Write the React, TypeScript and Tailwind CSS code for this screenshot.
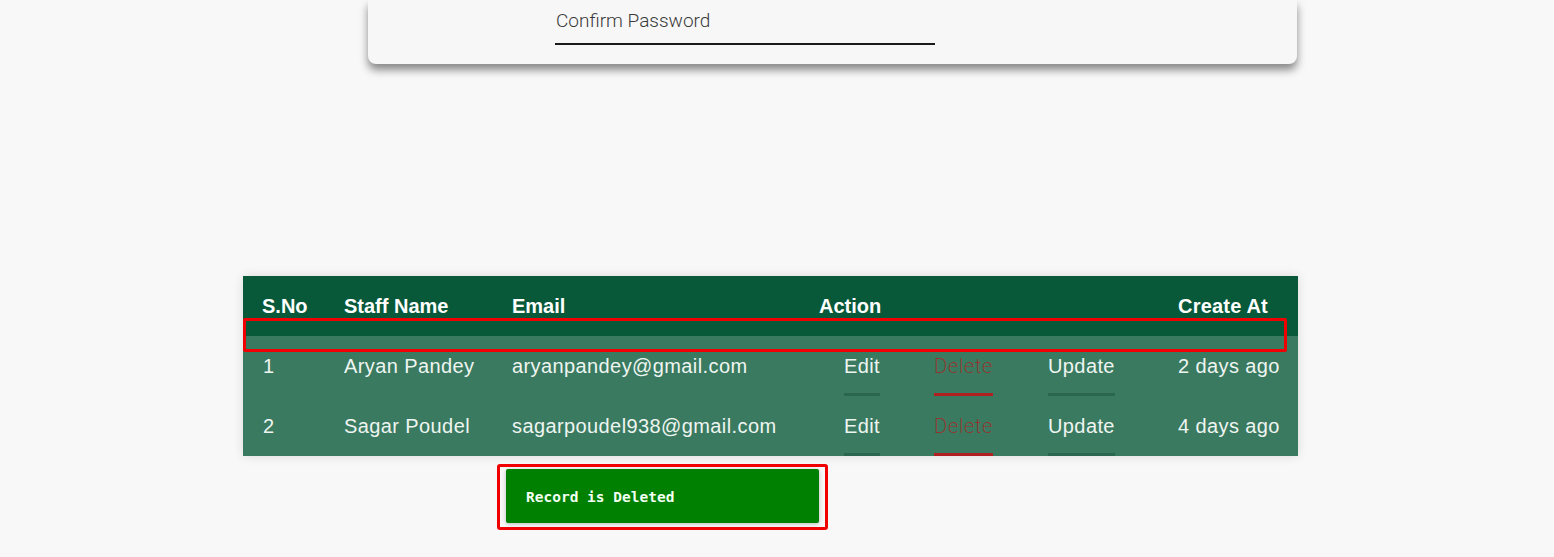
import React from 'react';

interface Staff {
  id: number;
  name: string;
  email: string;
  created: string;
}

const staff: Staff[] = [
  { id: 1, name: 'Aryan Pandey', email: 'aryanpandey@gmail.com', created: '2 days ago' },
  { id: 2, name: 'Sagar Poudel', email: 'sagarpoudel938@gmail.com', created: '4 days ago' },
];

const App: React.FC = () => {
  return (
    <div className="relative min-h-[557px] w-full bg-[#f8f8f8] font-['Liberation_Sans',Arial,sans-serif] overflow-hidden">
      {/* Form card (scrolled, only its bottom is visible) */}
      <div className="ml-[368px] w-[929px] h-[64px] bg-[#f7f7f7] rounded-b-[8px] shadow-[0_6px_8px_rgba(0,0,0,0.45)] pl-[187px] pt-[8px]">
        <div className="w-[380px]">
          <div className="font-['Roboto',sans-serif] font-light text-[19px] leading-[25px] text-[#3a3a3a] pl-[1px]">
            Confirm Password
          </div>
          <div className="mt-[10px] h-[2px] bg-[#1a1a1a]" />
        </div>
      </div>

      {/* Staff table */}
      <div className="ml-[243px] mt-[212px] w-[1055px] h-[180px] overflow-hidden shadow-[0_0_10px_rgba(0,0,0,0.12)]">
        <div className="flex h-[60px] bg-[#07593a] text-white font-bold text-[20px] leading-[24px] pt-[18px]">
          <div className="w-[101px] pl-[19px]">S.No</div>
          <div className="w-[168px]">Staff Name</div>
          <div className="w-[307px]">Email</div>
          <div className="w-[359px]">Action</div>
          <div className="tracking-[0.2px]">Create At</div>
        </div>
        {staff.map((s) => (
          <div
            key={s.id}
            className="flex h-[60px] bg-[#3a7a60] text-[#eef5f1] text-[20px] leading-[24px] tracking-[0.4px] pt-[18px]"
          >
            <div className="w-[101px] pl-[20px]">{s.id}</div>
            <div className="w-[168px]">{s.name}</div>
            <div className="w-[332px]">{s.email}</div>
            <div className="w-[90px]">
              <span className="inline-block pb-[15px] border-b-[3px] border-[#2b6650]">Edit</span>
            </div>
            <div className="w-[114px]">
              <span className="inline-block pb-[15px] border-b-[3px] border-[#b02020] text-[#a62624] font-['Roboto',sans-serif] font-extralight tracking-[0.8px]">
                Delete
              </span>
            </div>
            <div className="w-[130px]">
              <span className="inline-block pb-[15px] border-b-[3px] border-[#2b6650]">Update</span>
            </div>
            <div>{s.created}</div>
          </div>
        ))}
      </div>

      {/* Toast */}
      <div className="ml-[506px] mt-[13px] w-[313px] h-[54px] bg-[#008000] rounded-[2px] shadow-[0_1px_4px_rgba(0,0,0,0.25)] flex items-center pl-[20px] pt-[3px]">
        <span className="font-['DejaVu_Sans_Mono',monospace] font-bold text-[14.5px] text-[#f2fff2]">
          Record is Deleted
        </span>
      </div>

      {/* Red highlight annotations */}
      <div className="absolute left-[243px] top-[318px] w-[1044px] h-[34px] border-[3px] border-[#f00000] rounded-[2px]" />
      <div className="absolute left-[497px] top-[464px] w-[331px] h-[66px] border-[3px] border-[#f00000] rounded-[3px]" />
    </div>
  );
};

export default App;
